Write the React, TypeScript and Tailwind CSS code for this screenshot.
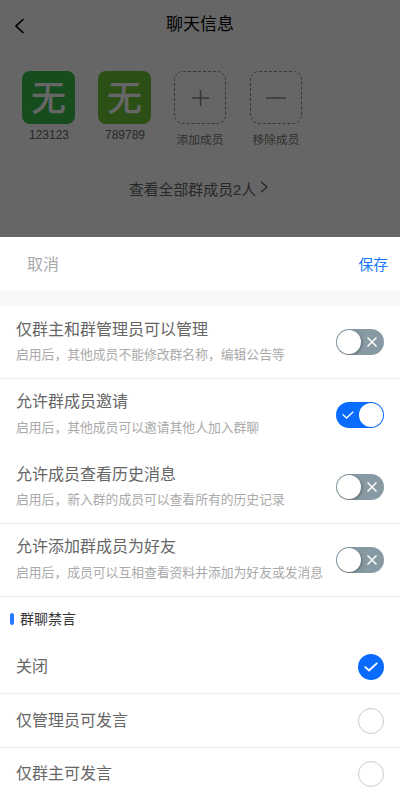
import { useState } from 'react'

interface SwitchProps {
  on: boolean
  onToggle: () => void
}

interface Permission {
  title: string
  desc: string
  on: boolean
  divider: boolean
}

const members = [
  { name: '123123', color: 'bg-[#3abd4f]' },
  { name: '789789', color: 'bg-[#6cc636]' },
]

const initialPermissions: Permission[] = [
  {
    title: '仅群主和群管理员可以管理',
    desc: '启用后，其他成员不能修改群名称，编辑公告等',
    on: false,
    divider: true,
  },
  {
    title: '允许群成员邀请',
    desc: '启用后，其他成员可以邀请其他人加入群聊',
    on: true,
    divider: false,
  },
  {
    title: '允许成员查看历史消息',
    desc: '启用后，新入群的成员可以查看所有的历史记录',
    on: false,
    divider: true,
  },
  {
    title: '允许添加群成员为好友',
    desc: '启用后，成员可以互相查看资料并添加为好友或发消息',
    on: false,
    divider: true,
  },
]

const muteOptions = ['关闭', '仅管理员可发言', '仅群主可发言']

function Switch({ on, onToggle }: SwitchProps) {
  return (
    <button
      role="switch"
      aria-checked={on}
      onClick={onToggle}
      className={`flex h-[26px] w-12 shrink-0 items-center overflow-hidden rounded-full px-px ${
        on ? 'flex-row bg-[#0a6cff]' : 'flex-row-reverse bg-[#8799a3]'
      }`}
    >
      <span className="flex flex-1 items-center justify-center">
        {on ? (
          <svg width="12" height="8" viewBox="0 0 12 8" fill="none" stroke="#fff" strokeWidth="1.3">
            <path d="M0.7 3.4 4.5 7 11.3 0.7" />
          </svg>
        ) : (
          <svg width="10" height="10" viewBox="0 0 10 10" fill="none" stroke="#fff" strokeWidth="1.5">
            <path d="M0.5 0.5 9.5 9.5M9.5 0.5 0.5 9.5" />
          </svg>
        )}
      </span>
      <span
        className={`h-6 w-6 rounded-full bg-white ${
          on ? '' : 'shadow-[1px_1px_3px_rgba(26,26,26,0.35)]'
        }`}
      />
    </button>
  )
}

function Radio({ checked }: { checked: boolean }) {
  if (!checked) {
    return <span className="h-[26px] w-[26px] rounded-full border border-[#ccc]" />
  }
  return (
    <span className="flex h-[26px] w-[26px] items-center justify-center rounded-full bg-[#0a6cff]">
      <svg width="14" height="10" viewBox="0 0 14 10" fill="none" stroke="#fff" strokeWidth="1.8">
        <path d="M0.7 4.6 5 8.5 13.3 0.8" />
      </svg>
    </span>
  )
}

export default function App() {
  const [permissions, setPermissions] = useState(initialPermissions)
  const [mute, setMute] = useState('关闭')

  const toggle = (title: string) =>
    setPermissions(permissions.map((p) => (p.title === title ? { ...p, on: !p.on } : p)))

  return (
    <div className="h-[800px] w-full overflow-hidden bg-white font-['Liberation_Sans','Noto_Sans_CJK_SC',sans-serif]">
      {/* Chat info page, dimmed behind the sheet */}
      <div className="relative h-[237px]">
        <header className="grid h-12 grid-cols-[40px_1fr_40px] items-center">
          <svg
            className="mt-1 ml-3.5"
            width="12"
            height="16"
            viewBox="0 0 12 16"
            fill="none"
            stroke="#000"
            strokeWidth="1.7"
          >
            <path d="M9.5 1 2 8 9.5 15" />
          </svg>
          <h1 className="pt-0.5 text-center text-[17px] text-black">聊天信息</h1>
        </header>

        <div className="flex pt-[23px] pl-2.5">
          {members.map((m) => (
            <div key={m.name} className="flex w-[76px] flex-col items-center">
              <div
                className={`flex h-[53px] w-[53px] items-center justify-center rounded-lg pt-0.5 pl-px text-[35px] leading-none font-medium text-white ${m.color}`}
              >
                无
              </div>
              <span className="mt-[3px] pl-0.5 text-xs text-[#666]">{m.name}</span>
            </div>
          ))}
          <div className="flex w-[76px] flex-col items-center">
            <div className="flex h-[53px] w-[52px] items-center justify-center rounded-[9px] border border-dashed border-[#888]">
              <svg width="18" height="18" viewBox="0 0 18 18" stroke="#888" strokeWidth="1.5">
                <path d="M9.5 1v16M1 9h17" />
              </svg>
            </div>
            <span className="mt-2 text-[11.7px] leading-4 text-[#777]">添加成员</span>
          </div>
          <div className="flex w-[76px] flex-col items-center">
            <div className="flex h-[53px] w-[52px] items-center justify-center rounded-[9px] border border-dashed border-[#888]">
              <svg width="20" height="18" viewBox="0 0 20 18" stroke="#888" strokeWidth="1.5">
                <path d="M0 9h20" />
              </svg>
            </div>
            <span className="mt-2 text-[11.7px] leading-4 text-[#777]">移除成员</span>
          </div>
        </div>

        <div className="mt-[31px] flex items-center justify-center pr-[3px] text-[14.9px] text-[#666]">
          查看全部群成员2人
          <svg
            className="mb-1.5 ml-1"
            width="8"
            height="12"
            viewBox="0 0 8 12"
            fill="none"
            stroke="#666"
            strokeWidth="1.4"
          >
            <path d="M1 0.7 7 6 1 11.3" />
          </svg>
        </div>

        <div className="absolute inset-0 bg-black/60" />
      </div>

      {/* Sheet */}
      <div className="flex h-[53px] items-center justify-between pt-0.5 pr-3 pl-[27px]">
        <button className="text-base text-[#aaa]">取消</button>
        <button className="pt-0.5 text-[14.7px] text-[#1677ff]">保存</button>
      </div>
      <div className="mb-[0.7px] h-4 bg-[#f8f8f8]" />

      {permissions.map((p) => (
        <div
          key={p.title}
          className={`flex h-[72.47px] items-center justify-between border-b px-4 ${
            p.divider ? 'border-[#eee]' : 'border-transparent'
          }`}
        >
          <div className="mb-[1.6px] whitespace-nowrap">
            <div className="text-base leading-6 text-[#666]">{p.title}</div>
            <div className="mt-[3.4px] text-[12.8px] leading-5 text-[#aaa]">{p.desc}</div>
          </div>
          <Switch on={p.on} onToggle={() => toggle(p.title)} />
        </div>
      ))}

      <div className="flex h-[44.1px] items-center gap-1.5 pl-2.5">
        <span className="h-3 w-1 rounded-sm bg-[#2979ff]" />
        <span className="pt-px text-sm text-[#333]">群聊禁言</span>
      </div>

      {muteOptions.map((option) => (
        <div
          key={option}
          onClick={() => setMute(option)}
          className="flex h-[53.6px] items-center justify-between border-b border-[#eee] px-4"
        >
          <span className="text-base text-[#666]">{option}</span>
          <Radio checked={mute === option} />
        </div>
      ))}
    </div>
  )
}
